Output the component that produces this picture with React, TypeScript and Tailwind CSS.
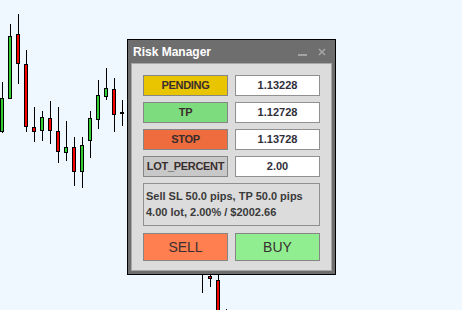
import React from 'react';

type Candle = [number, number, number, number, number, 'g' | 'r'];

// x, bodyTop, bodyBottom, wickTop, wickBottom, colour
const candles: Candle[] = [
  [0, 98, 132, 82, 133, 'g'],
  [8, 36, 99, 24, 99, 'g'],
  [16, 34, 64, 14, 84, 'r'],
  [24, 64, 127, 50, 132, 'r'],
  [32, 127, 132, 107, 142, 'r'],
  [40, 117, 131, 111, 141, 'g'],
  [48, 118, 131, 101, 144, 'r'],
  [56, 131, 152, 107, 163, 'r'],
  [64, 147, 153, 121, 161, 'g'],
  [72, 147, 172, 137, 186, 'r'],
  [80, 145, 172, 137, 188, 'g'],
  [88, 118, 141, 111, 158, 'g'],
  [96, 95, 120, 80, 129, 'g'],
  [104, 88, 97, 68, 100, 'g'],
  [112, 89, 115, 78, 132, 'r'],
  [120, 112, 114, 100, 126, 'g'],
  [200, 250, 268, 240, 293, 'r'],
  [208, 276, 279, 260, 287, 'r'],
  [216, 280, 330, 270, 330, 'r'],
  [224, 320, 340, 309, 340, 'g'],
];

const Chart: React.FC = () => (
  <svg className="absolute inset-0" width={462} height={310}>
    {candles.map(([x, bt, bb, wt, wb, c], i) => (
      <g key={i}>
        <line x1={x + 2.5} x2={x + 2.5} y1={wt} y2={wb} stroke="#000" strokeWidth={1} />
        <rect
          x={x + 0.5}
          y={bt + 0.5}
          width={3}
          height={Math.max(bb - bt - 1, 1)}
          fill={c === 'g' ? '#32cd32' : '#ff0000'}
          stroke="#000"
          strokeWidth={1}
        />
      </g>
    ))}
  </svg>
);

const Row: React.FC<{ label: string; value: string; bg: string }> = ({ label, value, bg }) => (
  <div className="flex gap-[7px] h-[21px]">
    <div className={`w-[85px] flex items-center justify-center border border-[#858585] text-[11px] font-bold tracking-[-0.3px] text-[#3a2d2d] ${bg}`}>
      {label}
    </div>
    <div className="w-[85px] flex items-center justify-center border border-[#909090] bg-white text-[11px] font-bold text-[#2f2f3a]">
      {value}
    </div>
  </div>
);

export default function App() {
  return (
    <div className="relative w-[462px] h-[310px] bg-[#f0f8ff] overflow-hidden font-['Liberation_Sans',Arial,sans-serif]">
      <Chart />

      <div className="absolute left-[127px] top-[39px] w-[209px] h-[236px] border border-black bg-[#6e6e6e] flex flex-col px-[3px] pb-[3px]">
        <div className="h-[23px] flex items-center justify-between pl-[2px] pr-[6px]">
          <span className="text-white text-[12px] font-bold">Risk Manager</span>
          <div className="flex items-center gap-[11px]">
            <svg width={9} height={8} viewBox="0 0 9 8">
              <rect x={0} y={6} width={9} height={2} fill="#a4a4a4" />
            </svg>
            <svg width={8} height={8} viewBox="0 0 8 8">
              <path d="M1 1 L7 7 M7 1 L1 7" stroke="#a4a4a4" strokeWidth={1.6} />
            </svg>
          </div>
        </div>

        <div className="flex-1 border border-[#a8a8a8] bg-[#dcdcdc] px-[11px] pt-[11px] flex flex-col">
          <div className="flex flex-col gap-[6px]">
            <Row label="PENDING" value="1.13228" bg="bg-[#e9c400]" />
            <Row label="TP" value="1.12728" bg="bg-[#7ddc7d]" />
            <Row label="STOP" value="1.13728" bg="bg-[#ee6c3d]" />
            <Row label="LOT_PERCENT" value="2.00" bg="bg-[#c8c8c8]" />
          </div>

          <div className="mt-[6px] h-[43px] border border-[#909090] bg-[#dcdcdc] px-[2px] pt-[4px] text-[11px] font-bold leading-[16px] text-[#3a3a3a]">
            <div>Sell SL 50.0 pips, TP 50.0 pips</div>
            <div>4.00 lot, 2.00% / $2002.66</div>
          </div>

          <div className="mt-[7px] flex gap-[7px] h-[28px]">
            <div className="w-[85px] flex items-center justify-center border border-[#858585] bg-[#ff7f50] text-[14px] text-[#3a3030]">
              SELL
            </div>
            <div className="w-[85px] flex items-center justify-center border border-[#858585] bg-[#90ee90] text-[14px] text-[#3a3030]">
              BUY
            </div>
          </div>
        </div>
      </div>
    </div>
  );
}
